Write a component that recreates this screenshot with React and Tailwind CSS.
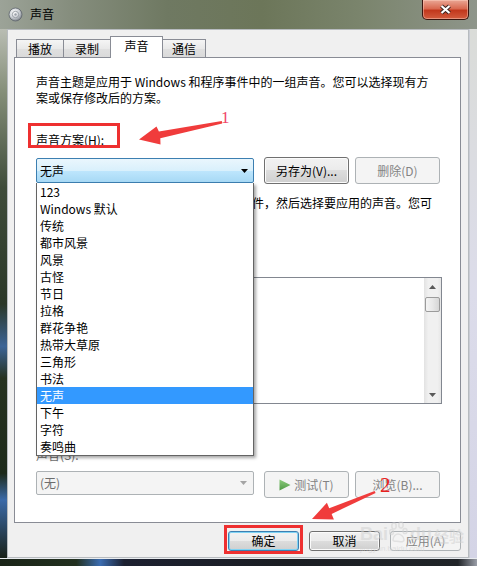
import React from 'react'

const SCHEMES = ['123', 'Windows 默认', '传统', '都市风景', '风景', '古怪', '节日', '拉格', '群花争艳', '热带大草原', '三角形', '书法', '无声', '下午', '字符', '奏鸣曲']

function Btn({ children, disabled, focused, className = '' }) {
  const look = disabled
    ? 'border-[#adb2b5] bg-[#f4f4f4] text-[#838383]'
    : focused
      ? 'border-[#3c7fb1] bg-[linear-gradient(#f2f2f2,#ebebeb_49%,#dddddd_50%,#cfcfcf)] shadow-[inset_0_0_0_1px_#7fd3f4] text-black'
      : 'border-[#707070] bg-[linear-gradient(#f2f2f2,#ebebeb_49%,#dddddd_50%,#cfcfcf)] shadow-[inset_0_0_0_1px_#fbfbfb] text-black'
  return (
    <div className={`flex shrink-0 items-center justify-center rounded-[3px] border leading-none ${look} ${className}`}>
      {children}
    </div>
  )
}

function Caret({ color = '#000', up = false }) {
  return (
    <svg width="7" height="4" viewBox="0 0 7 4">
      <path d={up ? 'M0 4h7L3.5 0z' : 'M0 0h7L3.5 4z'} fill={color} />
    </svg>
  )
}

function Tab({ label, active, first, width }) {
  if (active) {
    return (
      <div className={`relative z-10 -mb-px -ml-px flex h-[22px] ${width} items-center justify-center border border-b-0 border-[#898c95] bg-white pb-[3px]`}>
        {label}
      </div>
    )
  }
  return (
    <div className={`${first ? '' : '-ml-px'} flex h-[18px] ${width} items-center justify-center border border-b-0 border-[#898c95] bg-[linear-gradient(#f5f5f5,#e9e9e9_50%,#e0e0e0_51%,#dadada)]`}>
      {label}
    </div>
  )
}

function WindowIcon() {
  return (
    <svg width="15" height="15" viewBox="0 0 15 15">
      <defs>
        <radialGradient id="wi" cx="40%" cy="35%" r="70%">
          <stop offset="0" stopColor="#ffffff" />
          <stop offset="0.55" stopColor="#cfd3d8" />
          <stop offset="1" stopColor="#727880" />
        </radialGradient>
      </defs>
      <circle cx="7.5" cy="7.5" r="6.5" fill="url(#wi)" stroke="#5e646c" strokeWidth="0.8" />
      <circle cx="7.5" cy="7.5" r="3.2" fill="none" stroke="#8d939b" strokeWidth="0.8" />
      <circle cx="7.5" cy="7.5" r="1.2" fill="#9aa0a8" />
    </svg>
  )
}

export default function App() {
  return (
    <div className="relative flex h-[566px] w-[477px] flex-col overflow-hidden bg-[#4d5744] font-['Noto_Sans_CJK_SC',sans-serif] text-[12px] text-black">
      {/* title bar */}
      <div className="flex h-[29px] shrink-0 items-start bg-[linear-gradient(90deg,#9ca398_0%,#858d7d_15%,#6f7962_35%,#6c7659_55%,#7a846c_75%,#8e958a_100%)]">
        <div className="ml-[8px] mt-[7px]">
          <WindowIcon />
        </div>
        <div className="ml-[7px] mt-[6px] leading-[16px]">声音</div>
        <div className="ml-auto mr-[8px] flex h-[20px] w-[47px] items-center justify-center rounded-b-[5px] border border-t-0 border-[#3b1610] bg-[linear-gradient(#eaa795,#d96a51_45%,#c2381d_55%,#d35c3e)] shadow-[inset_0_0_0_1px_rgba(255,215,200,0.45)]">
          <svg width="13" height="11" viewBox="0 0 13 11">
            <path d="M2.5 2l8 7M10.5 2l-8 7" stroke="#3a2622" strokeWidth="4.2" />
            <path d="M2.5 2l8 7M10.5 2l-8 7" stroke="#ffffff" strokeWidth="2.2" />
          </svg>
        </div>
      </div>

      <div className="flex h-[529px] shrink-0">
        <div className="w-[7px] bg-[linear-gradient(#b9bdb3_0%,#848e78_12%,#3f4c3a_30%,#2b3828_52%,#3c6496_60%,#263220_66%,#1d2a1a_84%,#3b6aa8_89%,#1a2219_100%)]" />

        {/* client area */}
        <div className="flex w-[462px] flex-col border border-[#b7bbbf] bg-[#f0f0f0] pl-[6px] pt-[6px]">
          {/* tabs */}
          <div className="ml-[2px] flex h-[21px] items-end">
            <Tab label="播放" first width="w-[48px]" />
            <Tab label="录制" width="w-[48px]" />
            <Tab label="声音" active width="w-[53px]" />
            <Tab label="通信" width="w-[44px]" />
          </div>

          {/* tab panel */}
          <div className="flex h-[466px] w-[447px] flex-col border border-[#898c95] bg-white pl-[21px] pt-[16px]">
            <p className="whitespace-nowrap leading-[16px]">
              声音主题是应用于 Windows 和程序事件中的一组声音。您可以选择现有方
              <br />
              案或保存修改后的方案。
            </p>
            <p className="mt-[26px] leading-[16px]">声音方案(H):</p>

            <div className="mt-[9px] flex h-[27px] items-center">
              <div className="relative w-[218px]">
                <div className="flex h-[25px] items-center justify-between rounded-[2px] border border-[#3c7fb1] bg-[linear-gradient(#eaf6fd,#d9f0fc_50%,#bee6fd_51%,#a7d9f5)] pl-[3px] pr-[5px]">
                  <span>无声</span>
                  <Caret />
                </div>
                {/* open dropdown */}
                <div className="absolute left-0 top-[25px] z-20 w-[218px] border border-t-0 border-[#646464] bg-white shadow-[2px_2px_3px_rgba(0,0,0,0.35)]">
                  {SCHEMES.map(s => (
                    <div
                      key={s}
                      className={`h-[17px] whitespace-nowrap pl-[3px] leading-[17px] ${s === '无声' ? 'bg-[#3399ff] text-white' : ''}`}
                    >
                      {s}
                    </div>
                  ))}
                </div>
              </div>
              <Btn className="ml-[10px] h-[27px] w-[85px]">另存为(V)...</Btn>
              <Btn disabled className="ml-[6px] h-[27px] w-[85px]">删除(D)</Btn>
            </div>

            <div className="mt-[11px] leading-[16px]">
              <div className="flex whitespace-nowrap">
                <span className="w-[216px] shrink-0 tracking-[-1px]">若要更改声音，请单击以下列表中的程序事</span>
                <span>件，然后选择要应用的声音。您可</span>
              </div>
              <div className="whitespace-nowrap">以将更改保存为新的声音方案。</div>
            </div>
            <p className="mt-[16px] leading-[16px]">程序事件(E):</p>

            {/* program events list */}
            <div className="mt-[18px] flex h-[127px] w-[406px] justify-end border border-[#828790] bg-white">
              <div className="flex h-full w-[17px] flex-col items-center bg-[linear-gradient(90deg,#e2e2e2,#f0f0f0_25%,#f0f0f0_80%,#e6e6e6)]">
                <div className="flex h-[17px] items-center">
                  <Caret up color="#5a5a5a" />
                </div>
                <div className="mt-[2px] h-[15px] w-[15px] rounded-[2px] border border-[#9b9b9b] bg-[linear-gradient(90deg,#f4f4f4,#e8e8e8_50%,#d6d6d6)]" />
                <div className="mt-auto flex h-[17px] items-center">
                  <Caret color="#5a5a5a" />
                </div>
              </div>
            </div>

            <div className="mt-[10px] flex h-[16px] items-center gap-[5px]">
              <div className="h-[13px] w-[13px] border border-[#8f8f8f] bg-white" />
              <span className="leading-[16px]">播放 Windows 启动声音(P)</span>
            </div>

            <p className="mt-[17px] leading-[16px] text-[#6d6d6d]">声音(S):</p>

            <div className="mt-[8px] flex h-[27px] items-start">
              <div className="flex h-[24px] w-[218px] items-center justify-between rounded-[2px] border border-[#adb2b5] bg-[#f4f4f4] pl-[3px] pr-[6px] text-[#6d6d6d]">
                <span>(无)</span>
                <Caret color="#a4a4a4" />
              </div>
              <Btn disabled className="ml-[10px] h-[27px] w-[85px] gap-[3px]">
                <svg width="12" height="12" viewBox="0 0 12 12">
                  <defs>
                    <linearGradient id="play" x1="0" y1="0" x2="0" y2="1">
                      <stop offset="0" stopColor="#8ccb7d" />
                      <stop offset="1" stopColor="#4f9a45" />
                    </linearGradient>
                  </defs>
                  <path d="M0.5 0.5L11.5 6L0.5 11.5z" fill="url(#play)" />
                </svg>
                <span>测试(T)</span>
              </Btn>
              <Btn disabled className="ml-[6px] h-[27px] w-[85px]">浏览(B)...</Btn>
            </div>
          </div>

          {/* dialog buttons */}
          <div className="mt-[8px] flex w-[447px] justify-end gap-[10px]">
            <Btn focused className="h-[20px] w-[71px]">确定</Btn>
            <Btn className="h-[20px] w-[71px]">取消</Btn>
            <Btn disabled className="h-[20px] w-[71px]">应用(A)</Btn>
          </div>
        </div>

        <div className="w-[8px] border-l border-[#c9ccd4] bg-[linear-gradient(#dadcd8,#dcdcea_50%,#d4d4e6)]" />
      </div>

      <div className="h-[8px] shrink-0 border-t border-[#e9ecef] bg-[linear-gradient(90deg,#1a2418_0%,#22301f_16%,#3b6cb0_21%,#1c2030_26%,#1a1d22_60%,#202428_96%,#9a9ea8_100%)]" />

      {/* baidu watermark */}
      <div className="pointer-events-none absolute left-[360px] top-[521px] z-20 text-[#d2d2d2] opacity-55">
        <div className="flex items-end font-['Liberation_Sans',sans-serif] text-[18px] font-bold leading-none">
          <span>Bai</span>
          <svg width="20" height="22" viewBox="0 0 20 22" className="mx-[1px]">
            <g fill="none" stroke="#d2d2d2" strokeWidth="1.5">
              <ellipse cx="5" cy="5" rx="2.2" ry="3" />
              <ellipse cx="12" cy="4" rx="2.2" ry="3" />
              <ellipse cx="2.5" cy="11" rx="2" ry="2.6" />
              <ellipse cx="16" cy="10" rx="2" ry="2.6" />
              <path d="M4 19c0-4 3-6 5-6s6 2 6 6c0 2-3 2-5 1.5S4 21 4 19z" />
            </g>
          </svg>
          <span>du</span>
          <span className="ml-[2px] font-['Noto_Sans_CJK_SC',sans-serif] text-[15px]">经验</span>
        </div>
        <div className="mt-[2px] font-['Liberation_Sans',sans-serif] text-[8px] leading-none">jingyan.baidu.com</div>
      </div>

      {/* annotations */}
      <svg className="pointer-events-none absolute inset-0 z-30" width="477" height="566" viewBox="0 0 477 566">
        <rect x="29.5" y="124.5" width="89" height="22" fill="none" stroke="#ee3030" strokeWidth="3" />
        <rect x="225.5" y="526.5" width="76" height="26" fill="none" stroke="#ee3030" strokeWidth="3" />
        <polygon
          points="221.8,121 158.9,131.5 156.5,126.5 139,139.5 160.5,144.5 160.3,138.3 222.2,123.5"
          fill="#f03c3c"
        />
        <polygon
          points="374.6,491 329.2,508.3 326.9,502.8 312,519 333.9,519.4 331.6,513.9 375.6,493"
          fill="#f03c3c"
        />
      </svg>
      <span className="pointer-events-none absolute left-[221px] top-[109px] z-30 font-['Liberation_Serif',serif] text-[17px] leading-none text-[#f0466a]">1</span>
      <span className="pointer-events-none absolute left-[380px] top-[475px] z-30 font-['Liberation_Serif',serif] text-[21px] leading-none text-[#e82020]">2</span>
    </div>
  )
}
